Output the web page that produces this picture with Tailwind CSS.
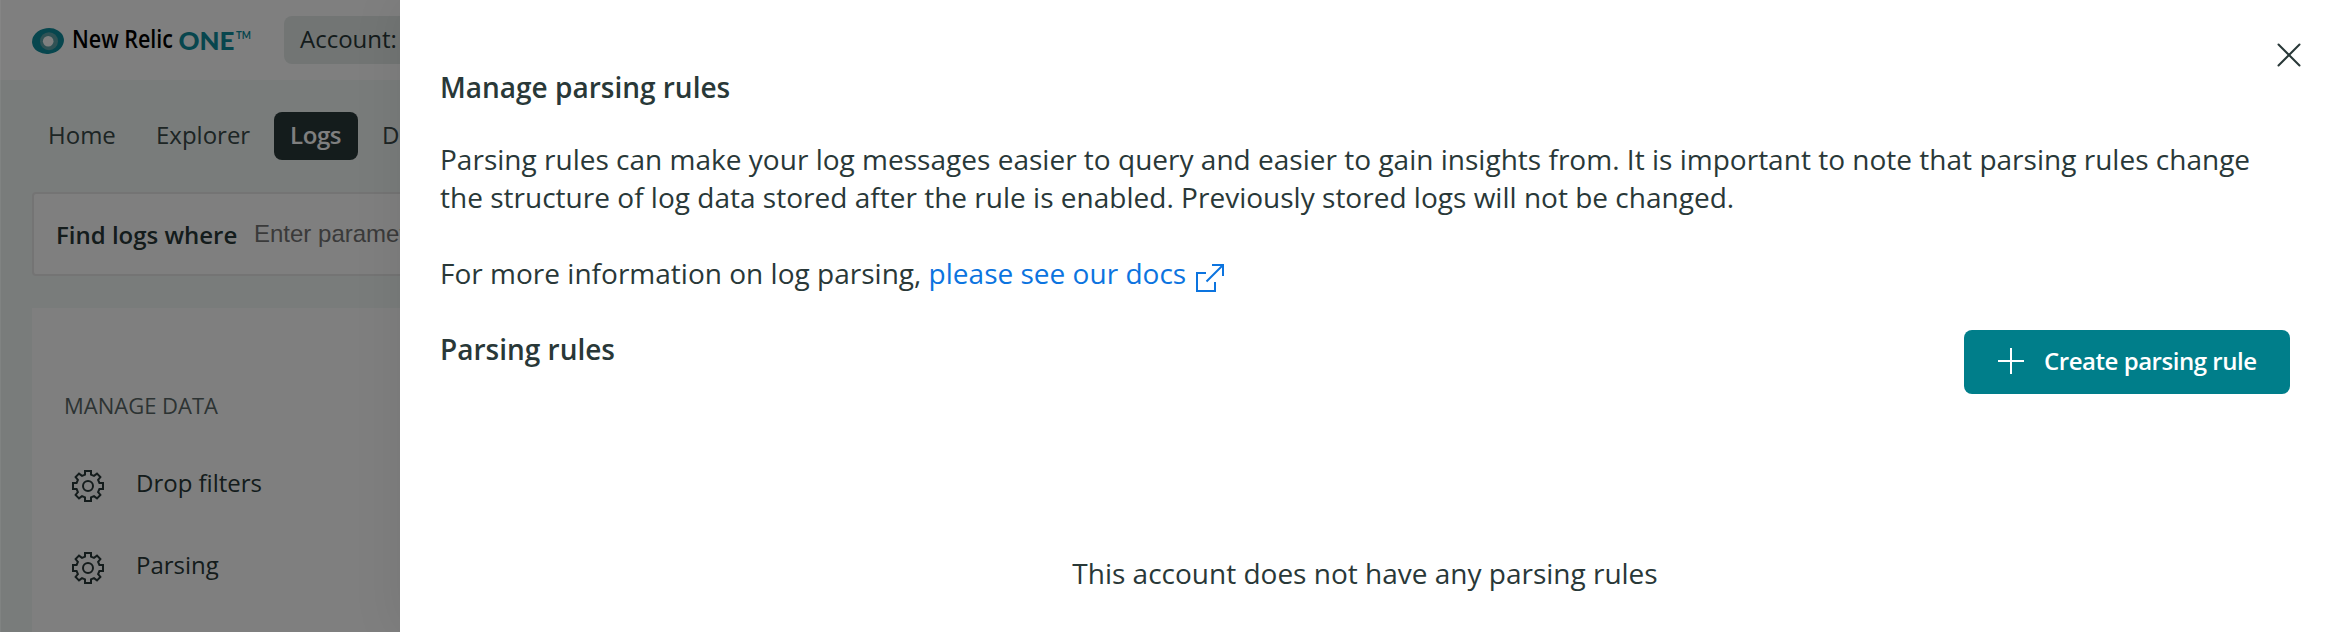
<!DOCTYPE html>
<html lang="en">
<head>
<meta charset="utf-8">
<title>Manage parsing rules</title>
<script src="https://cdn.jsdelivr.net/npm/@tailwindcss/browser@4"></script>
</head>
<body class="relative h-[632px] w-[2330px] overflow-hidden bg-[#f3f8f7] font-['Open_Sans',sans-serif] text-2xl/8 text-[#293838]">
  <svg class="hidden">
    <symbol id="gear" viewBox="0 0 32 32">
      <g fill="none" stroke="currentColor" stroke-width="2">
        <path d="M13 1h6v3.600l3 1.300L25 3.600 28.400 7l-2.300 3 1.300 3H31v6h-3.600l-1.300 3 2.300 3-3.400 3.400-3-2.300-3 1.300V31h-6v-3.600l-3-1.300-3 2.300L3.600 25l2.300-3-1.300-3H1v-6h3.600l1.300-3L3.600 7 7 3.600l3 2.300 3-1.300z"/>
        <circle cx="16" cy="16" r="5"/>
      </g>
    </symbol>
  </svg>

  <div class="flex h-full w-[400px] flex-col overflow-hidden whitespace-nowrap">
    <header class="flex h-20 shrink-0 items-start bg-white pt-4 pl-8">
      <svg class="mt-2 h-10 w-[252px] shrink-0" viewBox="0 0 252 40">
        <ellipse cx="16" cy="17" rx="16" ry="12.800" fill="#0f8d9c" transform="rotate(-8 16 17)"/>
        <circle cx="17" cy="17.200" r="9" fill="#61a5aa"/>
        <circle cx="16.200" cy="17.200" r="5.300" fill="#fff"/>
        <text x="40" y="24" font-family="Open Sans" font-size="24.500" font-weight="600" fill="#000" textLength="101" lengthAdjust="spacingAndGlyphs">New Relic</text>
        <text x="146.500" y="25.500" font-family="Lato" font-size="25.500" font-weight="900" fill="#0f8d9c" textLength="56" lengthAdjust="spacingAndGlyphs">ONE</text>
        <text x="204" y="14.500" font-family="Lato" font-size="10.500" font-weight="700" fill="#0f8d9c" textLength="15" lengthAdjust="spacingAndGlyphs">TM</text>
      </svg>
      <div class="h-12 w-[400px] shrink-0 rounded-lg bg-[#e4eae9] pt-[7px] pl-4">Account:</div>
    </header>

    <nav class="flex h-28 shrink-0 items-start pt-8 pl-12 text-[#3a4a49]">
      <span class="w-[108px] shrink-0 pt-[7px]">Home</span>
      <span class="w-[118px] shrink-0 pt-[7px]">Explorer</span>
      <span class="h-12 w-[84px] shrink-0 rounded-lg bg-[#293838] pt-[7px] pl-4 font-semibold tracking-[-0.4px] text-white">Logs</span>
      <span class="pt-[7px] pl-6">D</span>
    </nav>

    <div class="ml-8 flex h-[84px] w-[600px] shrink-0 items-start rounded border-2 border-[#e8e8e8] bg-white pt-[25px] pl-[22px]">
      <span class="w-[198px] shrink-0 font-semibold">Find logs where</span>
      <span class="-mt-px font-['Liberation_Sans',sans-serif] text-[#757575]">Enter parameters</span>
    </div>

    <aside class="mt-8 ml-8 grow bg-white pt-[81px] pl-8">
      <h2 class="text-[22px]/8 text-[#596766] uppercase">Manage data</h2>
      <ul class="mt-[46px]">
        <li class="flex h-[82px] items-start pl-2"><svg class="mt-[3px] mr-8 size-8"><use href="#gear"/></svg>Drop filters</li>
        <li class="flex items-start pl-2"><svg class="mt-[3px] mr-8 size-8"><use href="#gear"/></svg>Parsing</li>
      </ul>
    </aside>
  </div>

  <div class="absolute inset-0 flex justify-end overflow-hidden border-l border-white/5 bg-black/50">
    <main class="flex w-[1930px] flex-col bg-white pt-[68px] pr-10 pl-10 text-[28px]/[38px] shadow-[0_0_48px_rgba(0,20,10,0.08)]">
      <h1 class="font-semibold">Manage parsing rules</h1>
      <p class="mt-[34px] tracking-[0.013px] whitespace-nowrap">Parsing rules can make your log messages easier to query and easier to gain insights from. It is important to note that parsing rules change<br>the structure of log data stored after the rule is enabled. Previously stored logs will not be changed.</p>
      <p class="mt-[38px] flex tracking-[0.013px] whitespace-pre">For more information on log parsing, <a class="flex text-[#0c74df]">please see our docs<svg class="mt-[10px] ml-[10px] h-7 w-7" viewBox="0 0 28 28" fill="none" stroke="currentColor" stroke-width="2"><path d="M10 9H1v18h18V18M16 1h11v11M27 1 10.500 17.500"/></svg></a></p>
      <div class="mt-[38px] flex items-start justify-between">
        <h2 class="font-semibold">Parsing rules</h2>
        <button class="flex h-16 w-[326px] items-center rounded-lg bg-[#007e8a] pl-[34px] text-2xl/8 font-semibold tracking-[-0.46px] text-white">
          <svg class="-mt-0.5 mr-5 h-[26px] w-[26px]" viewBox="0 0 26 26" stroke="currentColor" stroke-width="2"><path d="M13 0v26M0 13h26"/></svg><span class="-mt-0.5">Create parsing rule</span>
        </button>
      </div>
      <p class="mt-40 text-center">This account does not have any parsing rules</p>
    </main>
    <svg class="absolute top-[43px] right-[29px] size-6" viewBox="0 0 24 24" stroke="#293838" stroke-width="2" stroke-linecap="round"><path d="m1.500 1.500 21 21m0-21-21 21"/></svg>
  </div>
</body>
</html>
